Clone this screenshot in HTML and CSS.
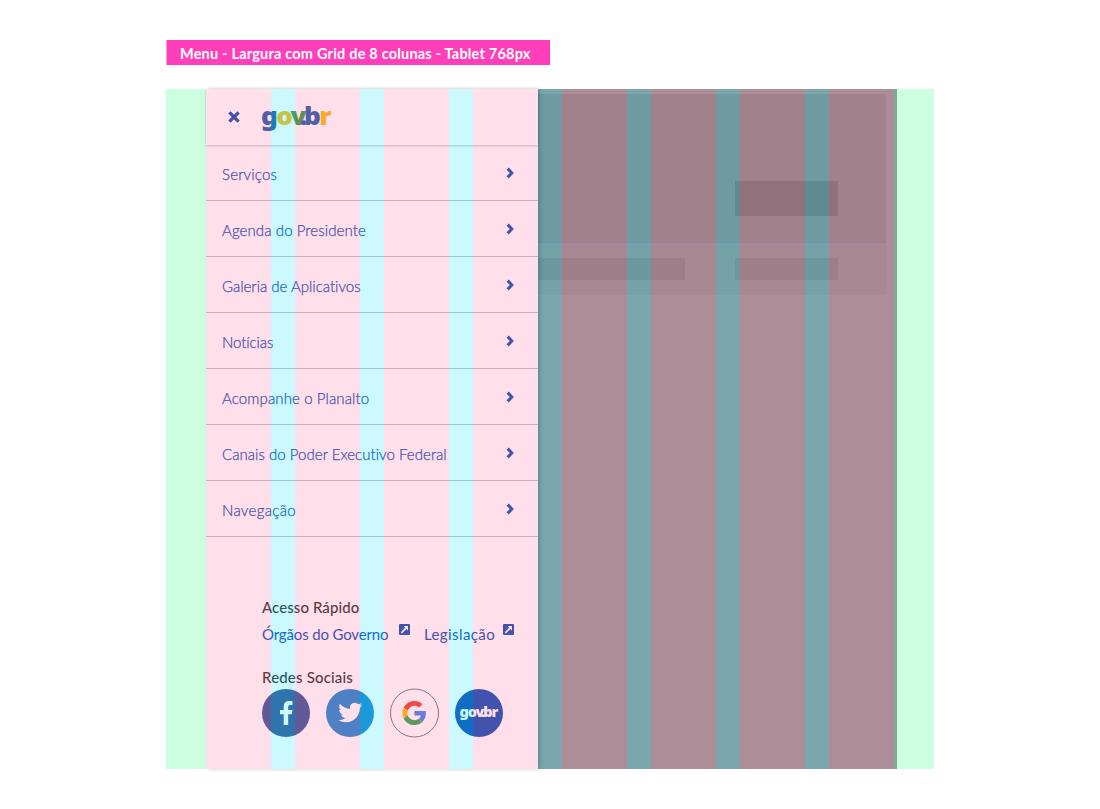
FILE: index.html
```html
<!DOCTYPE html>
<html lang="pt-BR">
<head>
<meta charset="utf-8">
<title>Menu - Tablet</title>
<link rel="stylesheet" href="styles.css">
</head>
<body>
<svg width="0" height="0" class="defs">
  <symbol id="chevron" viewBox="0 0 8 12"><path d="M1.6 1.6 5.8 6 1.6 10.4" fill="none" stroke="#1351b4" stroke-width="3"/></symbol>
  <symbol id="external" viewBox="0 0 11 11"><rect width="11" height="11" rx="1" fill="#1351b4"/><path d="M4.6 2H9v4.4L7.5 5 2.9 9.4 1.8 8.3 6.2 3.6z" fill="#fff"/></symbol>
</svg>
<h1 class="label"><span>Menu - Largura com Grid de 8 colunas - Tablet 768px</span></h1>
<main class="frame">
  <div class="page">
    <div class="hero"><div class="button"></div></div>
    <div class="strip"><div class="block wide"></div><div class="block"></div></div>
  </div>
  <aside class="drawer">
    <header class="top">
      <svg class="close" width="12" height="12" viewBox="0 0 12 12"><path d="M1.4 1.4l9.2 9.2M10.6 1.4l-9.2 9.2" stroke="#1351b4" stroke-width="3.3"/></svg>
      <svg class="logo" width="72" height="32" viewBox="0 0 72 32"><text y="23.5" transform="scale(1.07 1)"><tspan x="-.9" fill="#2960ab">g</tspan><tspan x="13.3" fill="#f4bd12">o</tspan><tspan x="26.6" fill="#3b9b47">v</tspan><tspan x="35.4" fill="#2960ab">.</tspan><tspan x="39.2" fill="#2960ab">b</tspan><tspan x="53.4" fill="#fcbb10">r</tspan></text></svg>
    </header>
    <nav class="menu">
      <a class="item"><span class="t1">Serviços</span><svg width="8" height="12"><use href="#chevron"/></svg></a>
      <a class="item"><span class="t2">Agenda do Presidente</span><svg width="8" height="12"><use href="#chevron"/></svg></a>
      <a class="item"><span class="t3">Galeria de Aplicativos</span><svg width="8" height="12"><use href="#chevron"/></svg></a>
      <a class="item"><span class="t4">Notícias</span><svg width="8" height="12"><use href="#chevron"/></svg></a>
      <a class="item"><span class="t5">Acompanhe o Planalto</span><svg width="8" height="12"><use href="#chevron"/></svg></a>
      <a class="item"><span class="t6">Canais do Poder Executivo Federal</span><svg width="8" height="12"><use href="#chevron"/></svg></a>
      <a class="item"><span class="t7">Navegação</span><svg width="8" height="12"><use href="#chevron"/></svg></a>
    </nav>
    <section class="extra">
      <h2 class="h-quick">Acesso Rápido</h2>
      <div class="links">
        <a class="link-a">Órgãos do Governo</a><svg width="11" height="11"><use href="#external"/></svg>
        <a class="link-b">Legislação</a><svg width="11" height="11"><use href="#external"/></svg>
      </div>
      <h2 class="h-social">Redes Sociais</h2>
      <div class="social">
        <svg width="48" height="48" viewBox="0 0 48 48"><circle cx="24" cy="24" r="24" fill="#3b5998"/><path d="M21.7 36V25.2H18v-4.3h3.7v-3.2c0-3.7 2.2-5.7 5.5-5.7 1.6 0 2.9.1 3.3.2v3.8h-2.2c-1.8 0-2.1.9-2.1 2.1v2.8h4.2l-.6 4.3h-3.6V36z" fill="#fff"/></svg>
        <svg width="48" height="48" viewBox="0 0 48 48"><circle cx="24" cy="24" r="24" fill="#2488d1"/><path transform="translate(12.3 11.5)" d="M23.95 4.57a10 10 0 0 1-2.82.77 4.96 4.96 0 0 0 2.16-2.72c-.95.55-2 .95-3.13 1.18a4.92 4.92 0 0 0-8.38 4.48C7.69 8.1 4.07 6.13 1.64 3.16a4.92 4.92 0 0 0 1.52 6.57 4.9 4.9 0 0 1-2.23-.61v.06c0 2.38 1.7 4.37 3.95 4.82a5 5 0 0 1-2.21.09 4.94 4.94 0 0 0 4.6 3.42A9.87 9.87 0 0 1 0 19.54a14 14 0 0 0 7.55 2.21c9.05 0 14-7.5 14-13.98 0-.21 0-.42-.02-.63a9.94 9.94 0 0 0 2.42-2.57z" fill="#fff"/></svg>
        <svg width="49" height="49" viewBox="0 0 49 49"><circle cx="24.5" cy="24" r="24" fill="none" stroke="#777" /><g transform="translate(12.4 12) scale(.5)"><path fill="#ea4335" d="M24 9.5c3.54 0 6.71 1.22 9.21 3.6l6.85-6.85C35.9 2.38 30.47 0 24 0 14.62 0 6.51 5.38 2.56 13.22l7.98 6.19C12.43 13.72 17.74 9.5 24 9.5z"/><path fill="#4285f4" d="M46.98 24.55c0-1.57-.15-3.09-.38-4.55H24v9.02h12.94c-.58 2.96-2.26 5.48-4.78 7.18l7.73 6c4.51-4.18 7.09-10.36 7.09-17.65z"/><path fill="#fbbc05" d="M10.53 28.59A14.5 14.5 0 0 1 9.77 24c0-1.6.27-3.14.76-4.59l-7.98-6.19A23.9 23.9 0 0 0 0 24c0 3.88.92 7.54 2.56 10.78z"/><path fill="#34a853" d="M24 48c6.48 0 11.93-2.13 15.89-5.81l-7.73-6C30.01 37.64 27.24 38.5 24 38.5c-6.26 0-11.57-4.22-13.47-9.91l-7.98 6.19C6.51 42.62 14.62 48 24 48z"/></g></svg>
        <svg class="mini" width="48" height="48" viewBox="0 0 48 48"><circle cx="24" cy="24" r="24" fill="#1351b4"/><text y="27.8" fill="#fff" transform="scale(1.07 1)"><tspan x="4.2">g</tspan><tspan x="12">o</tspan><tspan x="19.2">v</tspan><tspan x="24.2">.</tspan><tspan x="26.4">b</tspan><tspan x="34.2">r</tspan></text></svg>
      </div>
    </section>
  </aside>
  <div class="grid"><i></i><b></b><i></i><b></b><i></i><b></b><i></i><b></b><i></i><b></b><i></i><b></b><i></i><b></b><i></i></div>
</main>
</body>
</html>
```
FILE: styles.css
```css
* { box-sizing: border-box; }
body {
  margin: 0;
  padding: 40px 166px;
  background: #fff;
  font-family: Lato, "Open Sans", sans-serif;
  font-size: 15px;
  font-variant-ligatures: none;
}
.defs { position: absolute; }
.label {
  width: 383.5px;
  height: 25px;
  margin: 0 0 24px;
  padding: 0 13px;
  border-left: 1px solid #ff9fdc;
  background: #ff3fb9;
  color: #fff;
  font-size: 14.5px;
  font-weight: 700;
  letter-spacing: .2px;
  line-height: 27px;
  white-space: nowrap;
}
.frame { position: relative; width: 768px; height: 680px; display: flex; }
/* dimmed page below the open menu */
.page { width: 691px; margin-left: 40px; padding: 5px 11px 0 0; background: #999; }
.hero { height: 149px; padding: 87px 48px 0; background: #8a8a8a; border-bottom: 1px solid #82829e; }
.button { width: 103px; height: 35px; margin-left: auto; background: #767676; }
.strip { height: 52px; padding: 15px 48px 0; display: flex; justify-content: flex-end; gap: 50px; background: #939393; }
.block { width: 103px; height: 22px; background: #868686; }
.wide { width: 200px; }
/* menu panel */
.drawer {
  position: absolute;
  left: 40px;
  top: 0;
  width: 332px;
  height: 680px;
  background: #fff;
  box-shadow: 2px 0 4px rgba(0, 0, 0, .22);
  display: flex;
  flex-direction: column;
}
.top {
  height: 56px;
  flex: none;
  display: flex;
  align-items: center;
  padding-left: 22px;
  gap: 22px;
  box-shadow: 0 1px 2px rgba(0, 0, 0, .22);
}
svg { overflow: visible; }
.logo text { font: 900 24.5px "Noto Sans", sans-serif; }
.mini text { font: 900 13.5px "Noto Sans", sans-serif; }
.menu { display: flex; flex-direction: column; color: #1351b4; font-weight: 300; -webkit-text-stroke: .25px #1351b4; }
.item {
  height: 56px;
  padding: 0 24px 0 16px;
  border-bottom: 1px solid #c3c3c3;
  display: flex;
  justify-content: space-between;
  align-items: center;
  line-height: 20px;
}
.item span { padding-top: 2px; }
.t1 { letter-spacing: .18px; }
.t2 { letter-spacing: .1px; }
.t4 { letter-spacing: -.08px; }
.t5 { letter-spacing: .12px; }
.t6 { letter-spacing: .04px; }
.t7 { letter-spacing: .33px; }
.extra { padding: 60px 0 0 56px; color: #1351b4; }
.extra h2 { margin: 0; color: #333; font-size: 15px; font-weight: 500; line-height: 20px; letter-spacing: .08px; }
.links { display: flex; margin-top: 7px; line-height: 20px; height: 22px; }
.links svg { margin: 0 14.5px 0 10px; }
.links .link-b + svg { margin-left: 8px; }
.links a { white-space: nowrap; }
.link-a { width: 126.5px; letter-spacing: -.15px; }
.link-b { width: 71px; letter-spacing: .4px; }
.extra .h-social { margin-top: 21px; letter-spacing: .18px; }
.social { display: flex; gap: 16px; margin-top: 2px; }
/* 8-column guide */
.grid {
  position: absolute;
  inset: 0;
  display: grid;
  grid-template-columns: repeat(7, 65px 24px) 65px;
  padding: 0 40px;
  pointer-events: none;
}
.grid i { background: rgba(255, 95, 145, .2); }
.grid b { background: rgba(0, 225, 255, .2); }
.grid::before, .grid::after {
  content: "";
  position: absolute;
  top: 0;
  bottom: 0;
  width: 40px;
  background: rgba(0, 255, 95, .2);
}
.grid::before { left: 0; }
.grid::after { right: 0; }
```
